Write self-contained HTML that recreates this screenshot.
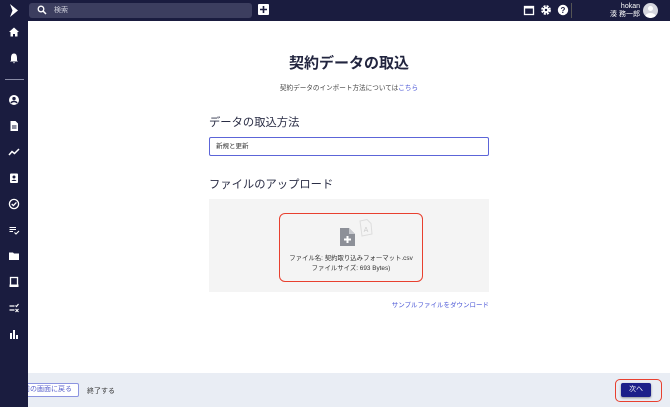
<!DOCTYPE html>
<html><head><meta charset="utf-8"><style>
*{margin:0;padding:0;box-sizing:border-box}
body{width:670px;height:407px;overflow:hidden;background:#fff;font-family:"Liberation Sans","Noto Sans CJK JP",sans-serif;position:relative;color:#2a2d45}
.hdr{position:absolute;left:0;top:0;width:670px;height:21px;background:#1a1c3f}
.side{position:absolute;left:0;top:0;width:28px;height:407px;background:#1a1c3f}
.search{position:absolute;left:29px;top:3px;width:223px;height:15px;background:#3c3e5f;border-radius:3px;color:#cfd0dc;font-size:7px;line-height:15px;padding-left:25px}
.abs{position:absolute}
.foot{position:absolute;left:28px;top:373px;width:642px;height:34px;background:#e9edf4}
</style></head><body>
<div class="hdr"></div>
<div class="side"></div>
<svg class="abs" style="left:8px;top:3px" width="12" height="15"><path d="M2 1 L10 7.5 L2 14 L4.5 7.5Z" fill="#fff"/></svg>
<div class="search">検索</div>
<svg class="abs" style="left:37px;top:5px" width="10" height="10"><circle cx="4" cy="4" r="2.8" stroke="#fff" stroke-width="1.3" fill="none"/><path d="M6 6 L9 9" stroke="#fff" stroke-width="1.5"/></svg>
<div class="abs" style="left:258px;top:4px;width:11px;height:11px;background:#fff;border-radius:1px"></div>
<svg class="abs" style="left:258px;top:4px" width="11" height="11"><path d="M5.5 2V9M2 5.5H9" stroke="#1a1c3f" stroke-width="1.6"/></svg>
<svg class="abs" style="left:523px;top:4px" width="12" height="12"><rect x="1.5" y="2.5" width="9" height="8" fill="none" stroke="#fff" stroke-width="1.3"/><rect x="1.5" y="2.5" width="9" height="2" fill="#fff"/></svg>
<svg class="abs" style="left:540px;top:4px" width="12" height="12"><circle cx="6" cy="6" r="3.6" fill="none" stroke="#fff" stroke-width="2.6" stroke-dasharray="1.9 1"/><circle cx="6" cy="6" r="3" fill="#fff"/><circle cx="6" cy="6" r="1.2" fill="#1a1c3f"/></svg>
<svg class="abs" style="left:557px;top:4px" width="12" height="12"><circle cx="6" cy="6" r="5.2" fill="#fff"/><text x="6" y="9" font-size="8" font-weight="bold" text-anchor="middle" fill="#1a1c3f" font-family="Liberation Sans">?</text></svg>
<div class="abs" style="left:571px;top:3px;width:1px;height:15px;background:#555"></div>
<div class="abs" style="left:600px;top:3px;width:40px;font-size:7px;color:#fff;text-align:right;line-height:8px">hokan<br>湊 務一郎</div>
<div class="abs" style="left:643px;top:3px;width:15px;height:15px;border-radius:50%;background:#d5d6de;overflow:hidden"><div style="position:absolute;left:5px;top:3px;width:5px;height:5px;border-radius:50%;background:#fff"></div><div style="position:absolute;left:2px;top:10px;width:11px;height:8px;border-radius:50%;background:#fff"></div></div>
<svg class="abs" style="left:8px;top:26px" width="12" height="12"><path d="M6 1.5 L11 6 H9.5 V10.5 H7 V8 H5 V10.5 H2.5 V6 H1Z" fill="#fff"/></svg>
<svg class="abs" style="left:8px;top:52px" width="12" height="12"><path d="M6 1.5C3.5 1.5 3 4 3 6V8.5L2 9.5H10L9 8.5V6C9 4 8.5 1.5 6 1.5ZM5 10.3H7L6 11.5Z" fill="#fff"/></svg>
<div class="abs" style="left:5px;top:79px;width:19px;height:1px;background:#8a8ca6"></div>
<svg class="abs" style="left:8px;top:94px" width="12" height="12"><circle cx="6" cy="6" r="5" fill="#fff"/><circle cx="6" cy="4.6" r="1.7" fill="#1a1c3f"/><path d="M3 9C4 7 8 7 9 9" stroke="#1a1c3f" stroke-width="1.4" fill="none"/></svg>
<svg class="abs" style="left:8px;top:120px" width="12" height="12"><path d="M2.5 1H7.5L10 3.5V11H2.5Z" fill="#fff"/><path d="M4 6H8.5M4 8H8.5" stroke="#1a1c3f"/></svg>
<svg class="abs" style="left:8px;top:146px" width="12" height="12"><path d="M1 9L4 5.5L6.5 7.5L11 3" stroke="#fff" stroke-width="1.5" fill="none"/></svg>
<svg class="abs" style="left:8px;top:172px" width="12" height="12"><rect x="2" y="1.5" width="8" height="9.5" rx="1" fill="#fff"/><circle cx="6" cy="5" r="1.5" fill="#1a1c3f"/><path d="M3.5 9C4 7.3 8 7.3 8.5 9Z" fill="#1a1c3f"/></svg>
<svg class="abs" style="left:8px;top:198px" width="12" height="12"><circle cx="6" cy="6" r="4.6" stroke="#fff" stroke-width="1.3" fill="none"/><path d="M3.7 6L5.4 7.6L8.4 4.4" stroke="#fff" stroke-width="1.3" fill="none"/></svg>
<svg class="abs" style="left:8px;top:224px" width="12" height="12"><path d="M1.5 3.5H8M1.5 5.5H8M1.5 7.5H5" stroke="#fff" stroke-width="1.1"/><path d="M6.5 8.5L8 10L11 7" stroke="#fff" stroke-width="1.1" fill="none"/></svg>
<svg class="abs" style="left:8px;top:250px" width="12" height="12"><path d="M1 2.5H5L6 3.5H11V10H1Z" fill="#fff"/></svg>
<svg class="abs" style="left:8px;top:276px" width="12" height="12"><rect x="2.5" y="1.5" width="7" height="8" fill="none" stroke="#fff" stroke-width="1.3"/><rect x="1.5" y="8.5" width="9" height="2.5" fill="#fff"/></svg>
<svg class="abs" style="left:8px;top:302px" width="12" height="12"><path d="M1.5 4H6.5M1.5 8H6.5" stroke="#fff" stroke-width="1.2"/><path d="M7.5 7L10.5 10M10.5 7L7.5 10M7.5 3.5L8.5 4.5L10.5 2" stroke="#fff" stroke-width="1.1" fill="none"/></svg>
<svg class="abs" style="left:8px;top:328px" width="12" height="12"><rect x="2" y="5" width="2" height="6" fill="#fff"/><rect x="5" y="2" width="2" height="9" fill="#fff"/><rect x="8" y="7" width="2" height="4" fill="#fff"/></svg>
<div class="abs" style="left:28px;top:52px;width:642px;text-align:center;font-size:15px;font-weight:bold;color:#22253f">契約データの取込</div>
<div class="abs" style="left:28px;top:82px;width:642px;text-align:center;font-size:6.6px;color:#444">契約データのインポート方法については<span style="color:#4a56d6">こちら</span></div>
<div class="abs" style="left:209px;top:114px;font-size:11.3px;color:#2a2d45">データの取込方法</div>
<div class="abs" style="left:209px;top:137px;width:280px;height:19px;border:1.3px solid #5c65d8;border-radius:2px;font-size:6.5px;line-height:17px;padding-left:6px;color:#333">新規と更新</div>
<div class="abs" style="left:209px;top:176px;font-size:11.3px;color:#2a2d45">ファイルのアップロード</div>
<div class="abs" style="left:209px;top:199px;width:280px;height:93px;background:#f4f4f4"></div>
<div class="abs" style="left:279px;top:213px;width:144px;height:69px;border:1.5px solid #e8402f;border-radius:6px"></div>
<svg class="abs" style="left:339px;top:227px" width="17" height="20"><path d="M1 1H10L16 7V19H1Z" fill="#8d9098"/><path d="M10 1V7H16" fill="#c8cacf"/><path d="M8.5 9V16M5 12.5H12" stroke="#fff" stroke-width="2"/></svg>
<svg class="abs" style="left:357px;top:219px" width="16" height="18"><path d="M3 2L10 0.5L14 4.5L15 15L5 17Z" fill="none" stroke="#ddd" stroke-width="1"/><text x="9" y="13" font-size="7" fill="#ccc" text-anchor="middle">A</text></svg>
<div class="abs" style="left:279px;top:254px;width:144px;text-align:center;font-size:6.4px;line-height:10px;color:#333">ファイル名: 契約取り込みフォーマット.csv<br>ファイルサイズ: 693 Bytes)</div>
<div class="abs" style="left:300px;top:299px;width:189px;text-align:right;font-size:6.5px;color:#4a56d6">サンプルファイルをダウンロード</div>
<div class="foot"></div>
<div class="abs" style="left:12px;top:383px;width:67px;height:14px;border:1px solid #8c94e0;border-radius:2px;background:#fff;font-size:7px;line-height:12px;color:#5a62cc;text-align:right;padding-right:6px">前の画面に戻る</div>
<div class="side" style="top:373px;height:34px"></div>
<div class="abs" style="left:87px;top:386px;font-size:7px;color:#333">終了する</div>
<div class="abs" style="left:615px;top:379px;width:47px;height:23px;border:1.5px solid #e8402f;border-radius:5px"></div>
<div class="abs" style="left:621px;top:383px;width:30px;height:14px;background:#1c1f8a;border-radius:2px;font-size:7px;line-height:14px;color:#fff;text-align:center;box-shadow:0 1px 2px rgba(0,0,0,.4)">次へ</div>
</body></html>
